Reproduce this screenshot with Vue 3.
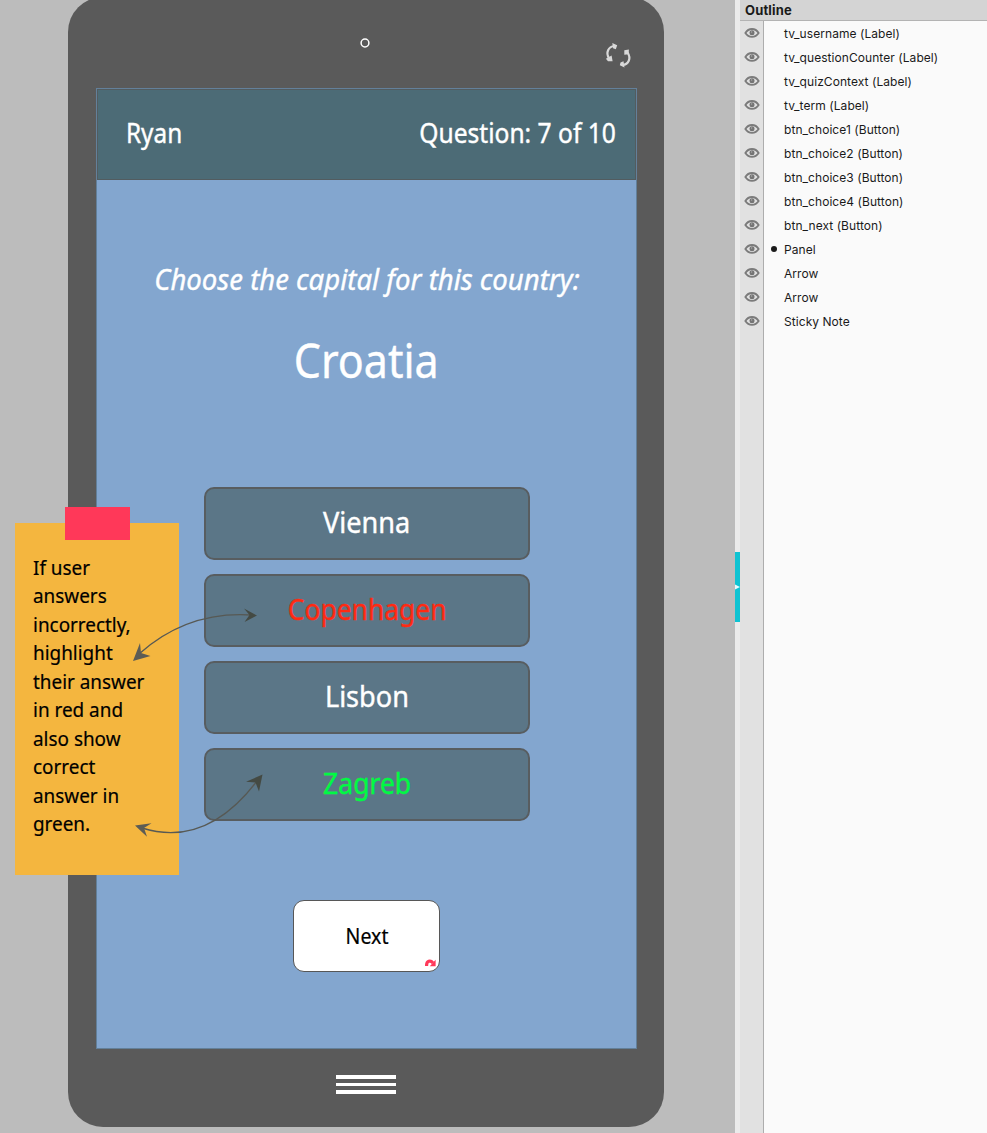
<script setup>
const choices = [
  { text: 'Vienna', cls: 'vienna' },
  { text: 'Copenhagen', cls: 'copenhagen' },
  { text: 'Lisbon', cls: 'lisbon' },
  { text: 'Zagreb', cls: 'zagreb' },
]
const noteLines = [
  'If user', 'answers', 'incorrectly,', 'highlight', 'their answer',
  'in red and', 'also show', 'correct', 'answer in', 'green.',
]
const outline = [
  'tv_username (Label)', 'tv_questionCounter (Label)', 'tv_quizContext (Label)', 'tv_term (Label)',
  'btn_choice1 (Button)', 'btn_choice2 (Button)', 'btn_choice3 (Button)', 'btn_choice4 (Button)',
  'btn_next (Button)', 'Panel', 'Arrow', 'Arrow', 'Sticky Note',
]
</script>

<template>
  <div class="app">
    <main class="canvas">
      <div class="phone">
        <div class="phone-top">
          <svg class="camera" width="12" height="12" viewBox="0 0 12 12"><circle cx="6" cy="6" r="3.9" /></svg>
          <svg class="rotate" width="28" height="28" viewBox="0 0 28 28">
            <path class="stroke" d="M10.500 4C4.500 4.500 1.200 10.500 5.200 16.500M23.600 10.500C27.500 16.500 24.500 22.500 18.500 23" />
            <path d="M8.300.900L13.200 3.200 11.800 7.200 9 6.200zM1.900 16.800L7.600 13.500 8.600 19.300 4 19.200zM20.300 8.300L24.900 7.600 24.700 12.200 20.300 12.800zM19.500 19.300L20.500 25.500 15.800 23.200 16.500 20.500z" />
          </svg>
        </div>
        <section class="screen">
          <header class="bar">
            <span class="name">Ryan</span>
            <span class="counter">Question: 7 of 10</span>
          </header>
          <div class="context"><span>Choose the capital for this country:</span></div>
          <div class="term"><span>Croatia</span></div>
          <div class="choices">
            <button v-for="c in choices" :key="c.text" class="choice" :class="c.cls"><span>{{ c.text }}</span></button>
          </div>
          <button class="next">
            <span>Next</span>
            <svg class="link" width="11" height="8" viewBox="0 0 11 8">
              <path class="hook" d="M1.600 7C1.300 1.500 5.500 1 8 4" />
              <path d="M10.600.800V7.300H4.800z" />
            </svg>
          </button>
        </section>
        <div class="home"><i></i><i></i><i></i></div>
      </div>

      <aside class="note">
        <div class="tape"></div>
        <p v-for="line in noteLines" :key="line"><span>{{ line }}</span></p>
      </aside>

      <svg class="arrows" width="280" height="250" viewBox="0 600 280 250">
        <path class="line" d="M139 654Q187 611 251 615" />
        <path d="M133 661L140 643 141 653 150.500 656z" />
        <path class="dark" d="M257 615.500L244 608.500 249.500 615 244.500 622z" />
        <path class="line" d="M142 828Q206 848 257 781" />
        <path d="M135 825.500L151.500 823.300 144 828 147 836.700z" />
        <path class="dark" d="M262.500 774.500L246 781.800 255.500 782.500 259 791.500z" />
      </svg>
    </main>

    <div class="divider"><div class="grip">
      <svg width="5" height="6" viewBox="0 0 5 6"><path d="M0 .500L5 3 0 5.500z" /></svg>
    </div></div>

    <aside class="panel">
      <h2>Outline</h2>
      <ul>
        <li v-for="(item, i) in outline" :key="i">
          <svg class="eye" width="16" height="12" viewBox="0 0 16 12">
            <path class="lid" d="M1.400 6C4.600.700 11.400.700 14.600 6 11.400 11.100 4.600 11.100 1.400 6z" />
            <circle class="iris" cx="8" cy="5.800" r="2.500" />
            <circle class="glint" cx="7.600" cy="5" r=".7" />
          </svg>
          <span class="dot" :class="{ on: item === 'Panel' }"></span>
          <span class="label">{{ item }}</span>
        </li>
      </ul>
    </aside>
  </div>
</template>

<style>
body { margin: 0; overflow: hidden; }
</style>

<style scoped>
* { box-sizing: border-box; }
.app { display: flex; width: 987px; height: 1133px; overflow: hidden; font-family: "Noto Sans", sans-serif; }
.canvas { position: relative; width: 735px; background: #bcbcbc; overflow: hidden; }
.phone { width: 595.500px; height: 1129.500px; margin: -3px 0 0 68px; padding: 0 27px 0 28px; border-radius: 35px; background: #5a5a5a; }
.phone-top { display: flex; justify-content: flex-end; height: 91px; }
.camera { margin: 40px 233px 0 0; fill: none; stroke: #fff; stroke-width: 1.500px; }
.rotate { margin: 45px 4.500px 0 0; fill: #d8d8d8; }
.rotate .stroke { fill: none; stroke: #d8d8d8; stroke-width: 2.200px; }
.screen { display: flex; flex-direction: column; align-items: center; width: 541px; height: 961px; background: #83a6cf; border: 1px solid #63809a; }
.bar { display: flex; justify-content: space-between; align-items: center; flex: none; width: 539px; height: 91px; padding: 0 19px 4px 28px; background: #4c6b76; border: 1px solid #525c60; color: #fff; font-size: 27px; }
.bar span, .context span, .term span, .choice span, .next span, .note span { display: inline-block; white-space: nowrap; }
.bar span, .context span, .term span, .choice span { -webkit-text-stroke: .4px currentColor; }
.next span, .note span { -webkit-text-stroke: .2px currentColor; }
.name { transform: scaleX(.9); transform-origin: left; }
.counter { transform: scaleX(.911); transform-origin: right; }
.context { height: 40px; margin-top: 79px; line-height: 40px; color: #fff; font-size: 29.500px; font-style: italic; }
.context span { transform: scaleX(.933); }
.term { height: 64px; margin-top: 29px; line-height: 64px; color: #fff; font-size: 47px; }
.term span { transform: scaleX(.915); }
.choices { display: flex; flex-direction: column; gap: 14px; margin-top: 95px; }
button { padding: 0; font-family: inherit; }
.choice { width: 326px; height: 73px; padding: 0 0 4px 1px; border: 2px solid #585d60; border-radius: 10px; background: #5b7687; color: #fff; font-size: 29px; }
.choice span { transform: scaleX(.935); }
.copenhagen { color: #ff2a12; }
.copenhagen span { transform: scaleX(.91); }
.zagreb { color: #00fa43; }
.zagreb span { transform: scaleX(.915); }
.next { position: relative; width: 147px; height: 72px; padding-left: 1px; margin-top: 79px; border: 1.500px solid #575757; border-radius: 11px; background: #fff; color: #000; font-size: 21px; }
.next span { transform: scaleX(.93); }
.link { position: absolute; right: 3px; bottom: 4px; fill: #ff3859; }
.link .hook { fill: none; stroke: #ff3859; stroke-width: 3.200px; }
.home { display: flex; flex-direction: column; gap: 4px; width: 60px; margin: 26px 0 0 240px; }
.home i { height: 3.500px; background: #fff; }
.note { position: absolute; left: 15px; top: 523px; width: 164px; height: 352px; padding: 30.500px 0 0 18px; background: #f4b63f; color: #000; font-size: 20px; }
.note p { height: 28.500px; margin: 0; line-height: 28.500px; }
.note span { transform: scaleX(.945); transform-origin: left; }
.tape { position: absolute; left: 50px; top: -16px; width: 65px; height: 33px; background: #ff3859; }
.arrows { position: absolute; left: 0; top: 600px; fill: #5c5c55; }
.arrows .dark { fill: #444a43; }
.arrows .line { fill: none; stroke: #575954; stroke-width: 1.400px; }
.divider { display: flex; align-items: center; width: 5px; background: #ebebeb; padding-top: 41px; }
.grip { display: flex; align-items: center; width: 5px; height: 70px; background: #0fc3d2; fill: #e8fcff; }
.panel { display: flex; flex-direction: column; width: 247px; background: #fafafa; font-family: Inter, sans-serif; color: #1a1a1a; }
h2 { height: 20px; margin: 0; padding-left: 5px; line-height: 21px; background: #d4d4d4; font-size: 13px; font-weight: 700; letter-spacing: .15px; }
ul { flex: 1; margin: 0; padding: 0; list-style: none; border-top: 1px solid #b3b3b3; background: linear-gradient(90deg, #e1e1e1 23px, #adadad 23px, #adadad 24px, #fafafa 24px); }
li { display: flex; align-items: center; height: 24px; padding-left: 4px; font-size: 12px; letter-spacing: .06px; }
.eye { flex: none; }
.lid { fill: #e1e1e1; stroke: #7b7b7b; stroke-width: 1.900px; }
.iris { fill: #747474; }
.glint { fill: #aaa; }
.dot { width: 6px; height: 6px; margin: 0 7px 0 11px; border-radius: 50%; }
.dot.on { background: #1a1a1a; }
.label { white-space: nowrap; }
</style>
